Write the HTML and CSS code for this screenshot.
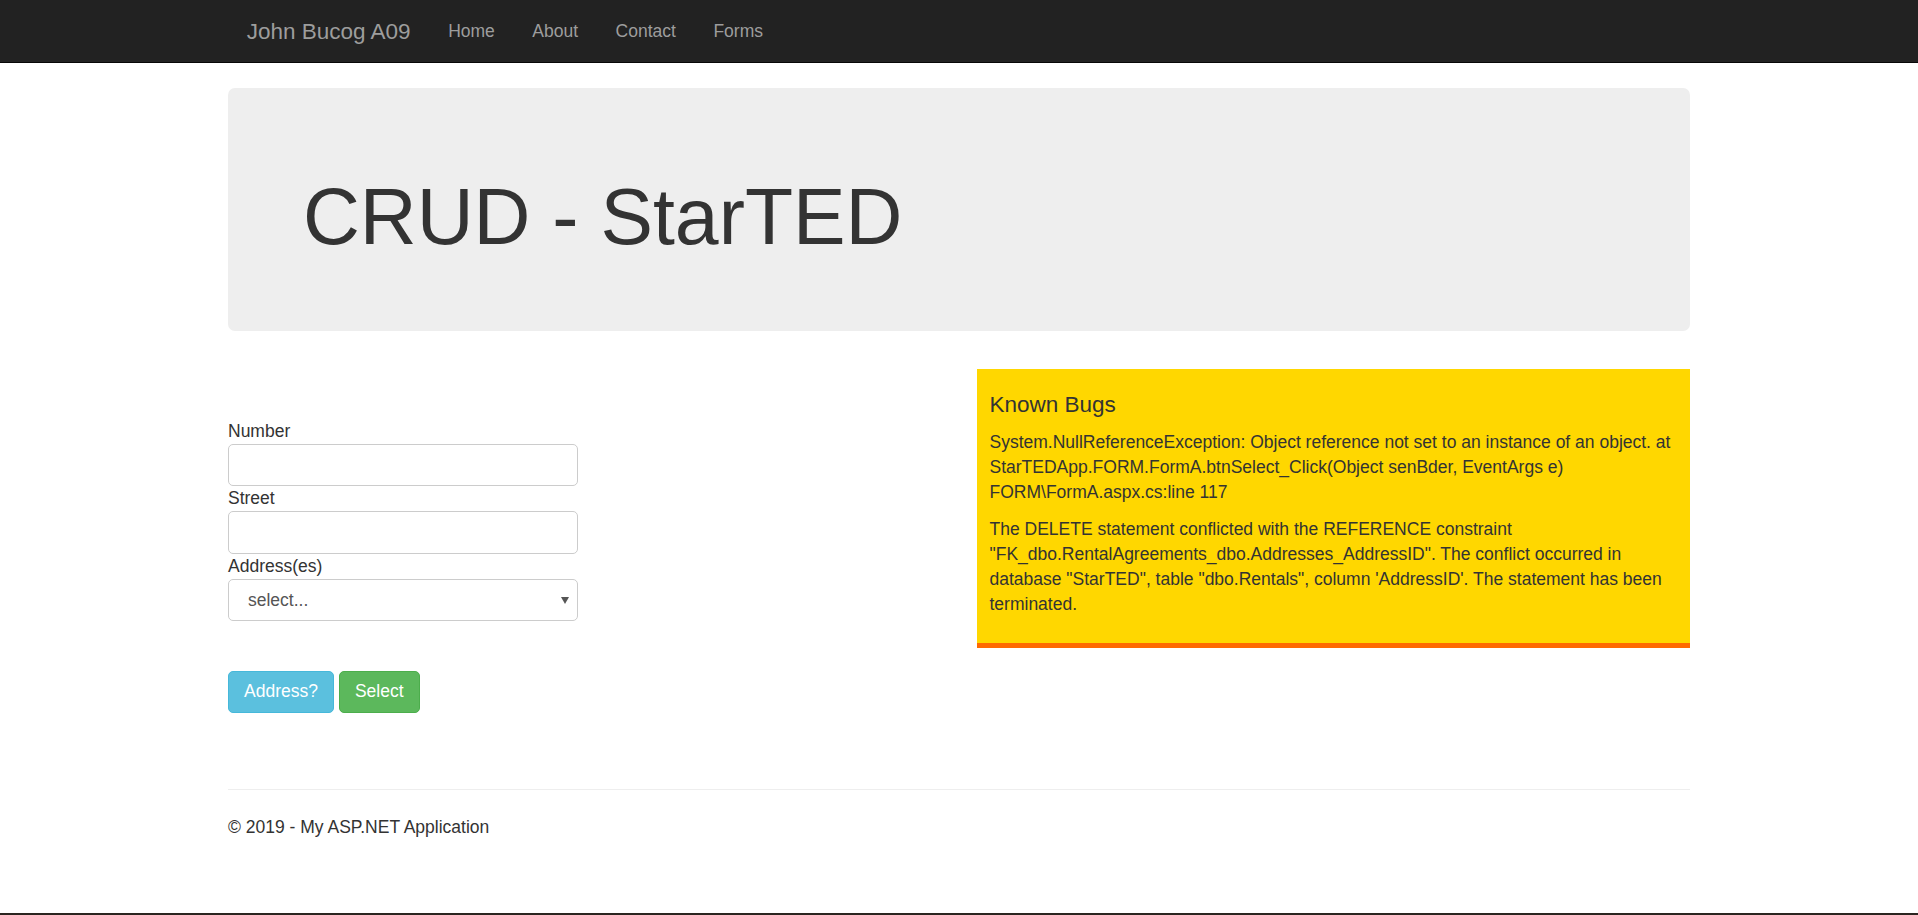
FILE: index.html
```html
<!DOCTYPE html>
<html lang="en">
<head>
<meta charset="utf-8">
<title>CRUD - StarTED</title>
<link rel="stylesheet" href="styles.css">
</head>
<body>
<div class="page">
  <header class="navbar">
    <div class="container nav-inner">
      <a class="brand" href="#">John Bucog A09</a>
      <nav class="nav-links">
        <a href="#">Home</a>
        <a href="#">About</a>
        <a href="#">Contact</a>
        <a href="#">Forms</a>
      </nav>
    </div>
  </header>

  <main class="container main">
    <section class="jumbotron">
      <h1>CRUD - StarTED</h1>
    </section>

    <div class="row">
      <form class="form-col">
        <label class="lbl" for="num">Number</label>
        <input class="field" id="num" type="text">
        <label class="lbl" for="street">Street</label>
        <input class="field" id="street" type="text">
        <label class="lbl" for="addr">Address(es)</label>
        <div class="select-wrap">
          <select class="field select" id="addr">
            <option>select...</option>
          </select>
          <svg class="caret" width="8" height="7" viewBox="0 0 8 7"><path d="M0 0 H8 L4 7 Z" fill="#555"/></svg>
        </div>
        <div class="buttons">
          <button type="button" class="btn btn-info">Address?</button>
          <button type="button" class="btn btn-success">Select</button>
        </div>
      </form>

      <div class="bug-col">
        <div class="bugs">
          <h4>Known Bugs</h4>
          <p>System.NullReferenceException: Object reference not set to an instance of an object. at StarTEDApp.FORM.FormA.btnSelect_Click(Object senBder, EventArgs e) FORM\FormA.aspx.cs:line 117</p>
          <p>The DELETE statement conflicted with the REFERENCE constraint "FK_dbo.RentalAgreements_dbo.Addresses_AddressID". The conflict occurred in database "StarTED", table "dbo.Rentals", column 'AddressID'. The statement has been terminated.</p>
        </div>
      </div>
    </div>

    <footer class="footer">
      <hr class="rule">
      <p>&copy; 2019 - My ASP.NET Application</p>
    </footer>
  </main>

  <div class="bottom-bar"></div>
</div>
</body>
</html>
```

FILE: styles.css
```css
* {
  box-sizing: border-box;
}

html, body {
  margin: 0;
  padding: 0;
}

body {
  font-family: "Liberation Sans", Arial, Helvetica, sans-serif;
  font-size: 17.5px;
  line-height: 25px;
  color: #333;
  background: #fff;
}

.page {
  min-height: 100vh;
  display: flex;
  flex-direction: column;
}

.container {
  width: 1462px;
  margin: 0 auto;
}

/* navbar */
.navbar {
  background: #222;
  border-bottom: 1px solid #080808;
  height: 63px;
}

.nav-inner {
  display: flex;
  align-items: center;
  height: 62px;
}

.brand {
  font-size: 22.5px;
  color: #9d9d9d;
  text-decoration: none;
  padding: 0 18.75px;
  line-height: 25px;
}

.nav-links {
  display: flex;
}

.nav-links a {
  color: #9d9d9d;
  text-decoration: none;
  padding: 0 18.75px;
  font-size: 17.5px;
}

/* main */
.main {
  padding-top: 25px;
}

.jumbotron {
  background: #eee;
  border-radius: 7px;
  padding: 86px 75px 70px;
  margin-bottom: 38px;
}

.jumbotron h1 {
  margin: 0;
  font-size: 78.75px;
  line-height: 86.6px;
  font-weight: normal;
  color: #333;
}

.row {
  display: grid;
  grid-template-columns: 1fr 1fr;
  column-gap: 36px;
  align-items: start;
}

.form-col {
  padding-top: 50px;
  margin: 0;
}

.lbl {
  display: block;
  line-height: 25px;
  margin: 0;
}

.field {
  display: block;
  width: 350px;
  height: 42.5px;
  margin: 0;
  border: 1px solid #ccc;
  border-radius: 5px;
  background: #fff;
  font-family: inherit;
  font-size: 17.5px;
  color: #555;
  padding: 0 15px;
}

.select-wrap {
  position: relative;
  width: 350px;
}

.select {
  appearance: none;
  -webkit-appearance: none;
  padding-left: 19px;
}

.caret {
  position: absolute;
  right: 9px;
  top: 18px;
}

.buttons {
  display: flex;
  gap: 5px;
  margin-top: 49.5px;
}

.btn {
  font-family: inherit;
  font-size: 17.5px;
  line-height: 25px;
  padding: 7.5px 15px;
  border-radius: 5px;
  color: #fff;
  cursor: pointer;
}

.btn-info {
  background: #5bc0de;
  border: 1px solid #46b8da;
}

.btn-success {
  background: #5cb85c;
  border: 1px solid #4cae4c;
}

/* known bugs panel */
.bugs {
  background: #ffd700;
  border-bottom: 5px solid #ff6a00;
  padding: 11.5px 12.5px 13.5px;
}

.bugs h4 {
  margin: 12.5px 0;
  font-size: 22.5px;
  line-height: 24.75px;
  font-weight: normal;
  color: #333;
}

.bugs p {
  margin: 0 0 12.5px;
  line-height: 25px;
  color: #333;
}

/* footer */
.footer {
  padding-top: 76px;
}

.rule {
  border: 0;
  border-top: 1px solid #eee;
  margin: 0 0 25px;
  height: 0;
}

.footer p {
  margin: 0;
}

.bottom-bar {
  margin-top: auto;
  height: 2px;
  background: #2b2520;
}
```
